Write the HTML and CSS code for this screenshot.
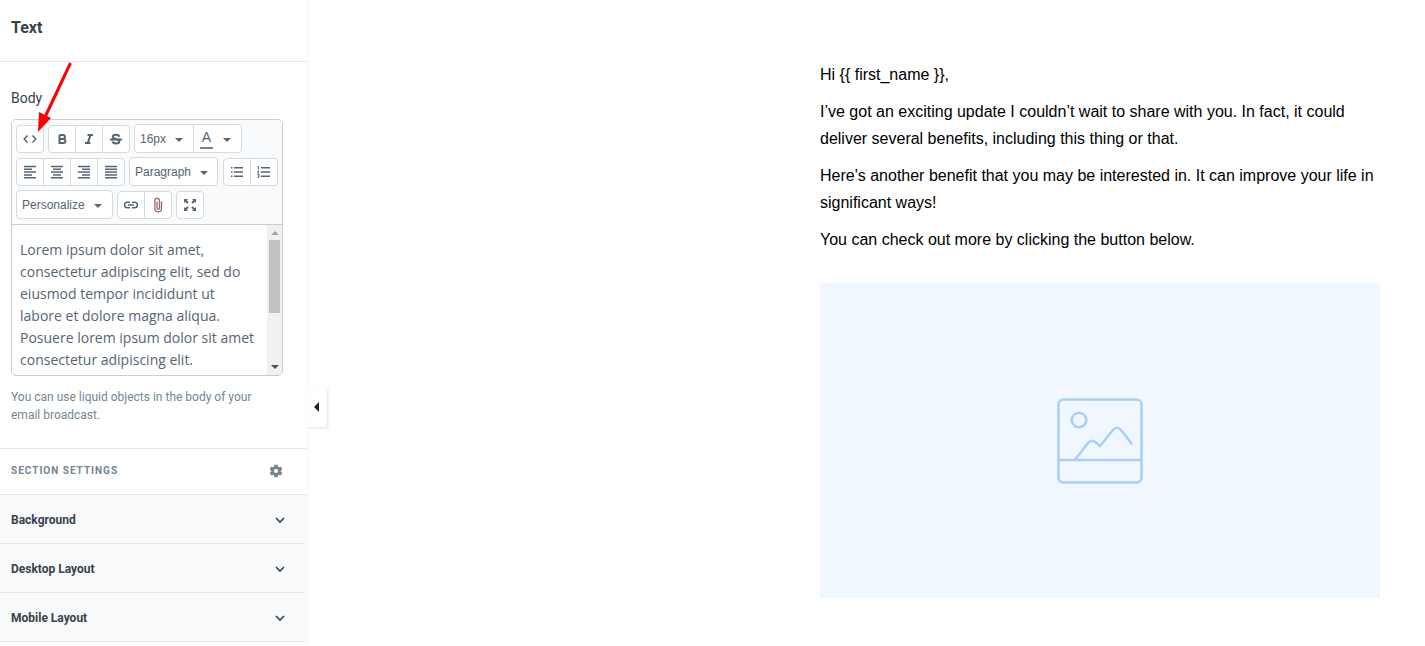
FILE: index.html
```
<!DOCTYPE html>
<html lang="en">
  <head>
    <meta charset="utf-8">
    <title>Email Builder</title>
    <link rel="stylesheet" href="styles.css">
  </head>
  <body>
    <div class="builder">
      <aside class="sidebar">
        <h1 class="sidebar-title">Text</h1>

        <div class="field">
          <label for="body-text">Body</label>
          <div class="editor">
            <div class="toolbar">
              <div class="toolbar-row">
                <div class="group">
                  <button type="button" title="HTML">
                    <svg width="16" height="16" viewBox="0 0 16 16"><path class="line" d="M5.500 4.500 2.200 8l3.300 3.500M10.500 4.500 13.800 8l-3.300 3.500"/></svg>
                  </button>
                </div>
                <div class="group">
                  <button type="button" title="Bold">
                    <svg width="16" height="16" viewBox="0 0 16 16"><path class="thick" d="M5.500 4v8h3.800a2 2 0 0 0 0-4.100H5.500M5.500 4H9a1.900 1.900 0 0 1 0 3.900"/></svg>
                  </button>
                  <button type="button" title="Italic">
                    <svg width="16" height="16" viewBox="0 0 16 16"><path class="thick" d="M6.500 4H12M4 12h5.500M9.400 4 6.800 12"/></svg>
                  </button>
                  <button type="button" title="Strikethrough">
                    <svg width="16" height="16" viewBox="0 0 16 16"><path class="thick" d="M2 8.500h12M11.300 5.800C11 4.400 9.700 3.800 8 3.800c-2 0-3.200.7-3.200 2C4.800 8.500 11.300 8 11.300 10.400c0 1.300-1.300 2-3.200 2-1.900 0-3.300-.7-3.500-2"/></svg>
                  </button>
                </div>
                <div class="group tall">
                  <div class="dropdown size">
                    <select aria-label="Font size"><option>16px</option></select>
                  </div>
                  <button type="button" class="color" title="Text color"><span class="color-letter">A</span></button>
                </div>
              </div>
              <div class="toolbar-row">
                <div class="group">
                  <button type="button" title="Align left">
                    <svg width="16" height="16" viewBox="0 0 16 16"><path class="bars" d="M2 2.500h12M2 5.300h8M2 8.100h12M2 10.900h8M2 13.700h12"/></svg>
                  </button>
                  <button type="button" title="Align center">
                    <svg width="16" height="16" viewBox="0 0 16 16"><path class="bars" d="M2 2.500h12M4 5.300h8M2 8.100h12M4 10.900h8M2 13.700h12"/></svg>
                  </button>
                  <button type="button" title="Align right">
                    <svg width="16" height="16" viewBox="0 0 16 16"><path class="bars" d="M2 2.500h12M6 5.300h8M2 8.100h12M6 10.900h8M2 13.700h12"/></svg>
                  </button>
                  <button type="button" title="Justify">
                    <svg width="16" height="16" viewBox="0 0 16 16"><path class="bars" d="M2 2.500h12M2 5.300h12M2 8.100h12M2 10.900h12M2 13.700h12"/></svg>
                  </button>
                </div>
                <div class="group tall">
                  <div class="dropdown format">
                    <select aria-label="Format"><option>Paragraph</option></select>
                  </div>
                </div>
                <div class="group last">
                  <button type="button" title="Bulleted list">
                    <svg width="16" height="16" viewBox="0 0 16 16"><path class="bars" d="M5 3.800h9M5 8h9M5 12.200h9M2 3.800h1.500M2 8h1.500M2 12.200h1.500"/></svg>
                  </button>
                  <button type="button" title="Numbered list">
                    <svg width="16" height="16" viewBox="0 0 16 16"><path class="bars" d="M5 3.800h9M5 8h9M5 12.200h9"/><path class="thin" d="M1.500 2.500h1v3M1.500 7h1.500L1.500 9h1.500M1.500 10.500H3v3H1.500M2 12h1"/></svg>
                  </button>
                </div>
              </div>
              <div class="toolbar-row">
                <div class="group tall">
                  <div class="dropdown personalize">
                    <select aria-label="Personalize"><option>Personalize</option></select>
                  </div>
                </div>
                <div class="group">
                  <button type="button" title="Link">
                    <svg width="16" height="16" viewBox="0 0 16 16"><path class="line" d="M7 5.200H4.400a2.800 2.800 0 0 0 0 5.600H7M9 5.200h2.600a2.800 2.800 0 0 1 0 5.600H9M5 8h6"/></svg>
                  </button>
                  <button type="button" title="Attachment">
                    <svg width="16" height="16" viewBox="0 0 16 16"><path class="clip" d="M11.500 4.500v7a3.300 3.300 0 0 1-6.600 0V3.700a2.300 2.300 0 0 1 4.600 0v7.300a1.200 1.200 0 0 1-2.400 0V4.500"/></svg>
                  </button>
                </div>
                <div class="group">
                  <button type="button" title="Fullscreen">
                    <svg width="16" height="16" viewBox="0 0 16 16"><path class="solid" d="M2 2h4L4.700 3.300l2 2L5.300 6.700l-2-2L2 6zM14 2v4l-1.300-1.300-2 2-1.400-1.400 2-2L10 2zM2 14v-4l1.300 1.300 2-2 1.400 1.400-2 2L6 14zM14 14h-4l1.300-1.300-2-2 1.400-1.400 2 2L14 10z"/></svg>
                  </button>
                </div>
              </div>
            </div>
            <div class="editor-content">
              <textarea id="body-text">Lorem ipsum dolor sit amet, consectetur adipiscing elit, sed do eiusmod tempor incididunt ut labore et dolore magna aliqua. Posuere lorem ipsum dolor sit amet consectetur adipiscing elit.</textarea>
              <div class="scrollbar">
                <span class="scroll-up"></span>
                <span class="scroll-thumb"></span>
                <span class="scroll-down"></span>
              </div>
            </div>
          </div>
          <p class="help">You can use liquid objects in the body of your email broadcast.</p>
        </div>

        <div class="section-header">
          <h2>Section settings</h2>
          <svg width="14" height="14" viewBox="0 0 14 14"><path fill-rule="evenodd" d="M5.400.8h3.200l.4 1.800 1 .6 1.800-.6 1.500 2.600-1.400 1.200v1.200l1.400 1.200-1.500 2.600-1.800-.6-1 .6-.4 1.800H5.400L5 11.400l-1-.6-1.800.6L.7 8.800l1.400-1.200V6.400L.7 5.200l1.500-2.600 1.800.6 1-.6zM7 4.900a2.100 2.100 0 1 0 0 4.200 2.100 2.100 0 0 0 0-4.200z"/></svg>
        </div>

        <div class="accordion">
          <button type="button">Background
            <svg width="10" height="8" viewBox="0 0 10 8"><path d="M1 2l4 4 4-4"/></svg>
          </button>
          <button type="button">Desktop Layout
            <svg width="10" height="8" viewBox="0 0 10 8"><path d="M1 2l4 4 4-4"/></svg>
          </button>
          <button type="button">Mobile Layout
            <svg width="10" height="8" viewBox="0 0 10 8"><path d="M1 2l4 4 4-4"/></svg>
          </button>
        </div>

        <button type="button" class="collapse" aria-label="Collapse sidebar"></button>

        <svg class="pointer" width="36" height="70" viewBox="0 0 36 70">
          <path class="shaft" d="M33 2 9 53"/>
          <path class="head" d="M1 70 2 50l12 6z"/>
        </svg>
      </aside>

      <main class="preview">
        <article class="email">
          <p>Hi {{ first_name }},</p>
          <p>I’ve got an exciting update I couldn’t wait to share with you. In fact, it could deliver several benefits, including this thing or that.</p>
          <p>Here's another benefit that you may be interested in. It can improve your life in significant ways!</p>
          <p>You can check out more by clicking the button below.</p>
          <div class="image-placeholder">
            <svg width="86" height="86" viewBox="0 0 86 86">
              <rect x="1.500" y="1.500" width="83" height="83" rx="5"/>
              <circle cx="22" cy="22" r="7.300"/>
              <path d="M2 62h82M18.500 61 31 45q4-4.500 8.500 0l3.500 3 13-16q4-4.500 8 0l10.500 13.500"/>
            </svg>
          </div>
        </article>
      </main>
    </div>
  </body>
</html>
```
FILE: styles.css
```
* {
  box-sizing: border-box;
}
body {
  margin: 0;
  background: #fff;
  color: #36434a;
  font-family: Roboto, sans-serif;
}
button,
select,
textarea {
  margin: 0;
  padding: 0;
  border: 0;
  background: none;
  color: inherit;
  font: inherit;
}
svg {
  display: block;
  flex: none;
}
.builder {
  display: flex;
  min-height: 100vh;
}

/* sidebar */
.sidebar {
  position: relative;
  flex: 0 0 307px;
  box-shadow: 0 0 3px rgba(0, 0, 0, 0.1);
}
.sidebar-title {
  margin: 0;
  padding: 18px 11px 23px;
  border-bottom: 1px solid #e3e7e9;
  font-size: 16px;
  font-weight: 700;
  line-height: 20px;
}
.field {
  padding: 26px 24px 24px 11px;
}
.field label {
  display: block;
  margin-bottom: 11px;
  font-size: 14px;
  line-height: 20px;
}
.help {
  margin: 12px 0 0;
  color: #748694;
  font-size: 12px;
  line-height: 18px;
}

/* editor */
.editor {
  overflow: hidden;
  border: 1px solid #c4cfd8;
  border-radius: 5px;
  color: #556575;
}
.toolbar {
  display: flex;
  flex-direction: column;
  gap: 4px;
  padding: 4px 4px 5px;
  background: #f8fafc;
  font-family: "Liberation Sans", Arial, sans-serif;
  font-size: 12px;
}
.toolbar-row {
  display: flex;
  align-items: flex-end;
  gap: 4px;
  height: 29px;
}
.group {
  display: flex;
  height: 28px;
  border: 1px solid #d3dae0;
  border-radius: 4px;
  background: #fff;
}
.group.tall {
  height: 29px;
}
.group.last {
  margin-left: auto;
}
.group button {
  display: flex;
  align-items: center;
  justify-content: center;
  width: 26px;
}
.group > * + * {
  box-sizing: content-box;
  border-left: 1px solid #d3dae0;
}
.dropdown {
  position: relative;
}
.dropdown select {
  width: 100%;
  height: 100%;
  padding: 1px 0 0 5px;
  appearance: none;
}
.dropdown::after,
.color::after {
  content: "";
  border: 4px solid transparent;
  border-top-color: #556575;
  border-bottom: 0;
}
.dropdown::after {
  position: absolute;
  top: 50%;
  right: 10px;
  margin-top: -1px;
  pointer-events: none;
}
.size {
  width: 58px;
}
.format {
  width: 87px;
}
.format::after {
  right: 9px;
}
.personalize {
  width: 95px;
}
.group .color {
  gap: 10px;
  width: 43px;
  padding-right: 4px;
}
.color::after {
  margin-top: 3px;
}
.color-letter {
  width: 13px;
  padding-bottom: 2px;
  border-bottom: 2px solid #808080;
  font-size: 14px;
  line-height: 16px;
}
.line,
.thick,
.bars,
.thin,
.clip {
  fill: none;
  stroke: #556575;
}
.line {
  stroke-width: 1.5px;
}
.thick {
  stroke-width: 2px;
}
.bars {
  stroke-width: 1.5px;
}
.clip {
  stroke: #966a66;
  stroke-width: 1.3px;
}
.solid {
  fill: #556575;
}
.editor-content {
  display: flex;
  height: 151px;
  border-top: 1px solid #c4cfd8;
}
.editor-content textarea {
  flex: 1;
  min-width: 0;
  padding: 14px 8px 0;
  overflow: hidden;
  outline: 0;
  resize: none;
  font-family: "Open Sans", sans-serif;
  font-size: 14px;
  line-height: 22px;
}
.scrollbar {
  display: flex;
  flex-direction: column;
  align-items: center;
  width: 15px;
  padding: 6px 0;
  background: #f1f1f1;
}
.scroll-up,
.scroll-down {
  border: 4px solid transparent;
}
.scroll-up {
  border-top: 0;
  border-bottom-color: #a3a3a3;
}
.scroll-down {
  margin-top: auto;
  border-bottom: 0;
  border-top-color: #505050;
}
.scroll-thumb {
  width: 11px;
  height: 73px;
  margin-top: 5px;
  background: #c1c1c1;
}

/* section settings */
.section-header {
  display: flex;
  align-items: center;
  justify-content: space-between;
  height: 47px;
  padding: 0 24px 1px 11px;
  border: 1px solid #e3e7e9;
  border-width: 1px 0;
  color: #748694;
}
.section-header h2 {
  margin: 0;
  font-size: 10px;
  font-weight: 700;
  letter-spacing: 1px;
  line-height: 14px;
  text-transform: uppercase;
}
.section-header svg {
  fill: #748694;
}
.accordion {
  background: #f7f9fa;
}
.accordion button {
  display: flex;
  align-items: center;
  justify-content: space-between;
  width: calc(100% - 3px);
  height: 49px;
  padding: 2px 19px 0 11px;
  border-bottom: 1px solid #e3e7e9;
  font-size: 12px;
  font-weight: 700;
}
.accordion svg {
  fill: none;
  stroke: #36434a;
  stroke-width: 1.6px;
}

.collapse {
  position: absolute;
  top: 387px;
  left: 100%;
  width: 20px;
  height: 40px;
  border-radius: 0 3px 3px 0;
  background: #fff;
  box-shadow: 1px 1px 3px rgba(0, 0, 0, 0.12);
}
.collapse::before {
  content: "";
  display: block;
  width: 0;
  margin-left: 7px;
  border: 5px solid transparent;
  border-right-color: #1c2125;
  border-left: 0;
}
.pointer {
  position: absolute;
  top: 62px;
  left: 37px;
  pointer-events: none;
}
.shaft {
  fill: none;
  stroke: #f00;
  stroke-width: 3px;
  stroke-linecap: round;
}
.head {
  fill: #f00;
}

/* email preview */
.preview {
  flex: 1;
  padding: 61px 45px 48px;
}
.email {
  max-width: 560px;
  margin-left: auto;
  color: #000;
  font-family: "Liberation Sans", Arial, sans-serif;
  font-size: 16px;
  line-height: 27px;
}
.email p {
  margin: 0 0 10px;
}
.image-placeholder {
  display: flex;
  align-items: center;
  justify-content: center;
  height: 315px;
  margin-top: 30px;
  background: #f0f7ff;
}
.image-placeholder svg {
  fill: none;
  stroke: #a6d0fa;
  stroke-width: 2.5px;
  stroke-linecap: round;
}
```
